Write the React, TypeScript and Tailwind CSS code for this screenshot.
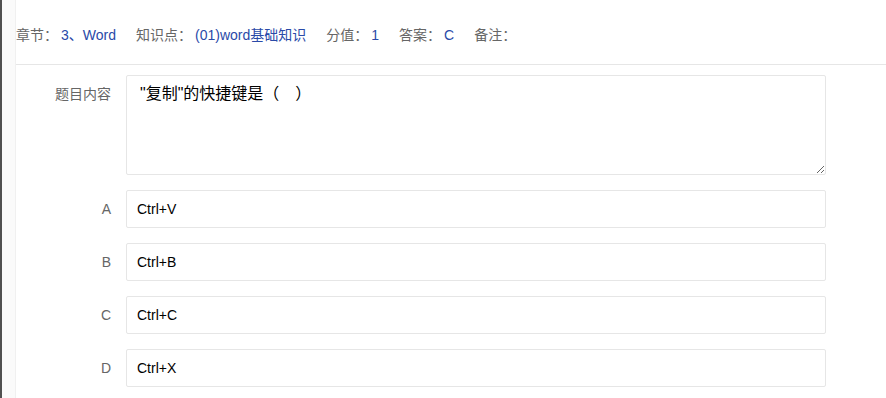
import React from "react";

const font = { fontFamily: '"Liberation Sans", "Noto Sans CJK SC", sans-serif' };

function Meta({ label, value }: { label: string; value: string }) {
  return (
    <div className="flex mr-[20px]">
      <span className="text-[#666]">{label}</span>
      <span className="ml-[3px] text-[#2a4aa8]">{value}</span>
    </div>
  );
}

function Row({ label, children }: { label: string; children: React.ReactNode }) {
  return (
    <div className="flex mb-[15px] shrink-0">
      <div className="w-[110px] shrink-0 px-[15px] py-[9px] text-right leading-[20px] text-[#666] text-[14px]">{label}</div>
      {children}
    </div>
  );
}

export default function App() {
  const options = [
    ["A", "Ctrl+V"],
    ["B", "Ctrl+B"],
    ["C", "Ctrl+C"],
    ["D", "Ctrl+X"],
  ];
  return (
    <div className="flex w-[886px] h-[398px] bg-white overflow-hidden" style={font}>
      <div className="w-[2px] shrink-0 bg-[#505050]" />
      <div className="w-[14px] shrink-0 bg-[#fafafa] border-r border-[#f0f0f0]" />
      <div className="flex-1 flex flex-col">
        <div className="h-[65px] shrink-0 pt-[25px] border-b border-[#e6e6e6] flex text-[14px] leading-[20px]">
          <Meta label="章节：" value="3、Word" />
          <Meta label="知识点：" value="(01)word基础知识" />
          <Meta label="分值：" value="1" />
          <Meta label="答案：" value="C" />
          <Meta label="备注：" value="" />
        </div>
        <div className="pt-[10px] shrink-0">
          <Row label="题目内容">
            <textarea
              readOnly
              value={'"复制"的快捷键是（　）'}
              className="w-[700px] h-[100px] border border-[#e6e6e6] rounded-[2px] pl-[13px] pr-[10px] py-[6px] text-[16px] leading-[24px] text-black outline-none"
              style={font}
            />
          </Row>
          {options.map(([k, v]) => (
            <Row key={k} label={k}>
              <div className="w-[700px] h-[38px] border border-[#e6e6e6] rounded-[2px] pl-[10px] flex items-center text-[14px] text-black">
                {v}
              </div>
            </Row>
          ))}
        </div>
      </div>
    </div>
  );
}
